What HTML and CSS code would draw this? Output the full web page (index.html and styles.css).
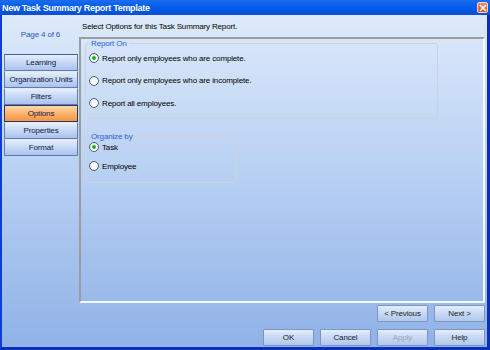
FILE: index.html
```html
<!DOCTYPE html>
<html lang="en">
  <head>
    <meta charset="UTF-8" />
    <title>New Task Summary Report Template</title>
    <link rel="stylesheet" href="styles.css">
  </head>
  <body>
    <div class="window">
      <header class="titlebar">
        <span class="title">New Task Summary Report Template</span>
        <span class="close">
          <svg width="8" height="8" viewBox="0 0 8 8">
            <path d="M1 1 L7 7 M7 1 L1 7" stroke="#fff" stroke-width="1.6" />
          </svg>
        </span>
      </header>

      <div class="content">
        <aside class="side">
          <p class="page">Page 4 of 6</p>
          <nav class="steps">
            <div class="step">Learning</div>
            <div class="step">Organization Units</div>
            <div class="step">Filters</div>
            <div class="step active">Options</div>
            <div class="step">Properties</div>
            <div class="step">Format</div>
          </nav>
        </aside>

        <section class="main">
          <p class="intro">Select Options for this Task Summary Report.</p>
          <div class="panel">
            <fieldset class="group report-on">
              <legend>Report On</legend>
              <label class="radio"><span class="dot checked"></span>Report only employees who are complete.</label>
              <label class="radio"><span class="dot"></span>Report only employees who are incomplete.</label>
              <label class="radio"><span class="dot"></span>Report all employees.</label>
            </fieldset>

            <fieldset class="group organize">
              <legend>Organize by</legend>
              <label class="radio"><span class="dot checked"></span>Task</label>
              <label class="radio"><span class="dot"></span>Employee</label>
            </fieldset>
          </div>
        </section>
      </div>

      <footer class="buttons">
        <div class="row">
          <button class="btn">&lt; Previous</button>
          <button class="btn">Next &gt;</button>
        </div>
        <div class="row">
          <button class="btn">OK</button>
          <button class="btn">Cancel</button>
          <button class="btn" disabled>Apply</button>
          <button class="btn">Help</button>
        </div>
      </footer>
    </div>
  </body>
</html>
```

FILE: styles.css
```css
body {
  margin: 0;
  font-family: "Liberation Sans", Arial, sans-serif;
  font-size: 8px;
  letter-spacing: -0.15px;
  color: #000;
}
.window {
  width: 490px;
  height: 350px;
  box-sizing: border-box;
  display: flex;
  flex-direction: column;
  border-left: 2px solid #0a3fd6;
  border-right: 3px solid #0a2fb8;
  border-bottom: 3px solid #0a2fb8;
  background: linear-gradient(#e1ecfb, #bcd3f4 45%, #8fb2e7);
}
.titlebar {
  height: 15px;
  margin-left: -2px;
  margin-right: -3px;
  display: flex;
  align-items: center;
  justify-content: space-between;
  padding: 0 2px 0 2px;
  background: linear-gradient(#1a6df0, #0057e6 60%, #0a4fd8);
}
.title {
  color: white;
  font-weight: bold;
  font-size: 9px;
  letter-spacing: -0.3px;
}
.close {
  width: 11px;
  height: 11px;
  box-sizing: border-box;
  border: 1px solid #f4d8cc;
  border-radius: 2px;
  background: linear-gradient(#f08a68, #dc4a22);
  display: flex;
  align-items: center;
  justify-content: center;
}
.content {
  display: grid;
  grid-template-columns: 77px 406px;
  flex: 1;
}
.side {
  padding-top: 15px;
}
.page {
  margin: 0 0 15px 0;
  text-align: center;
  color: #2a55c8;
}
.steps {
  margin-left: 2px;
  width: 74px;
}
.step {
  height: 17px;
  box-sizing: border-box;
  display: flex;
  align-items: center;
  justify-content: center;
  border: 1px solid #5f7bb2;
  border-top-color: #dfe8f8;
  background: linear-gradient(#e6eefc, #c3d6f5 55%, #aac3ee);
  color: #102040;
}
.step:first-child {
  border-top-color: #3f5c9c;
}
.step.active {
  border: 1px solid #2c3468;
  background: linear-gradient(#fdd7a8, #fbb06a 55%, #f69540);
}
.intro {
  margin: 0;
  padding: 7px 0 0 3px;
  height: 15px;
}
.panel {
  height: 266px;
  box-sizing: border-box;
  border-top: 2px solid #9a9c9e;
  border-left: 2px solid #9a9c9e;
  border-bottom: 2px solid #f6f8fc;
  border-right: 2px solid #f6f8fc;
  padding: 0 0 0 4px;
}
.group {
  margin: 0;
  padding: 0 0 0 3px;
  border: 1px solid #ccd3dc;
  border-radius: 3px;
  box-sizing: border-box;
}
.group legend {
  padding: 0 2px;
  margin-left: 0;
  color: #2a5fd6;
}
.report-on {
  width: 353px;
  height: 80px;
}
.organize {
  width: 152px;
  height: 51px;
  margin-top: 13px;
}
.radio {
  display: flex;
  align-items: center;
  gap: 3px;
  height: 12px;
}
.report-on .radio {
  margin: 0 0 10.5px 0;
}
.report-on .radio:first-of-type {
  margin-top: 4px;
}
.organize .radio {
  margin-bottom: 7px;
}
.dot {
  width: 10px;
  height: 10px;
  box-sizing: border-box;
  border-radius: 50%;
  border: 1px solid #4d6185;
  background: radial-gradient(circle at 60% 65%, #ffffff 35%, #dcdcd4);
  display: inline-block;
  position: relative;
}
.dot.checked::after {
  content: "";
  position: absolute;
  left: 2px;
  top: 2px;
  width: 4px;
  height: 4px;
  border-radius: 50%;
  background: #24b21e;
}
.buttons {
  padding: 2px 2px 1px 0;
  display: flex;
  flex-direction: column;
  align-items: flex-end;
  gap: 7px;
  height: 44px;
  box-sizing: border-box;
}
.row {
  display: flex;
  gap: 6px;
}
.btn {
  width: 51px;
  height: 17px;
  padding: 0;
  font-family: "Liberation Sans", Arial, sans-serif;
  font-size: 8px;
  letter-spacing: -0.15px;
  color: #1a1a2a;
  border: 1px solid #7f95bd;
  border-radius: 1px;
  background: linear-gradient(#e4edfb, #c2d5f3 60%, #b0c8ef);
}
.btn:disabled {
  color: #9aa6b8;
}
```
